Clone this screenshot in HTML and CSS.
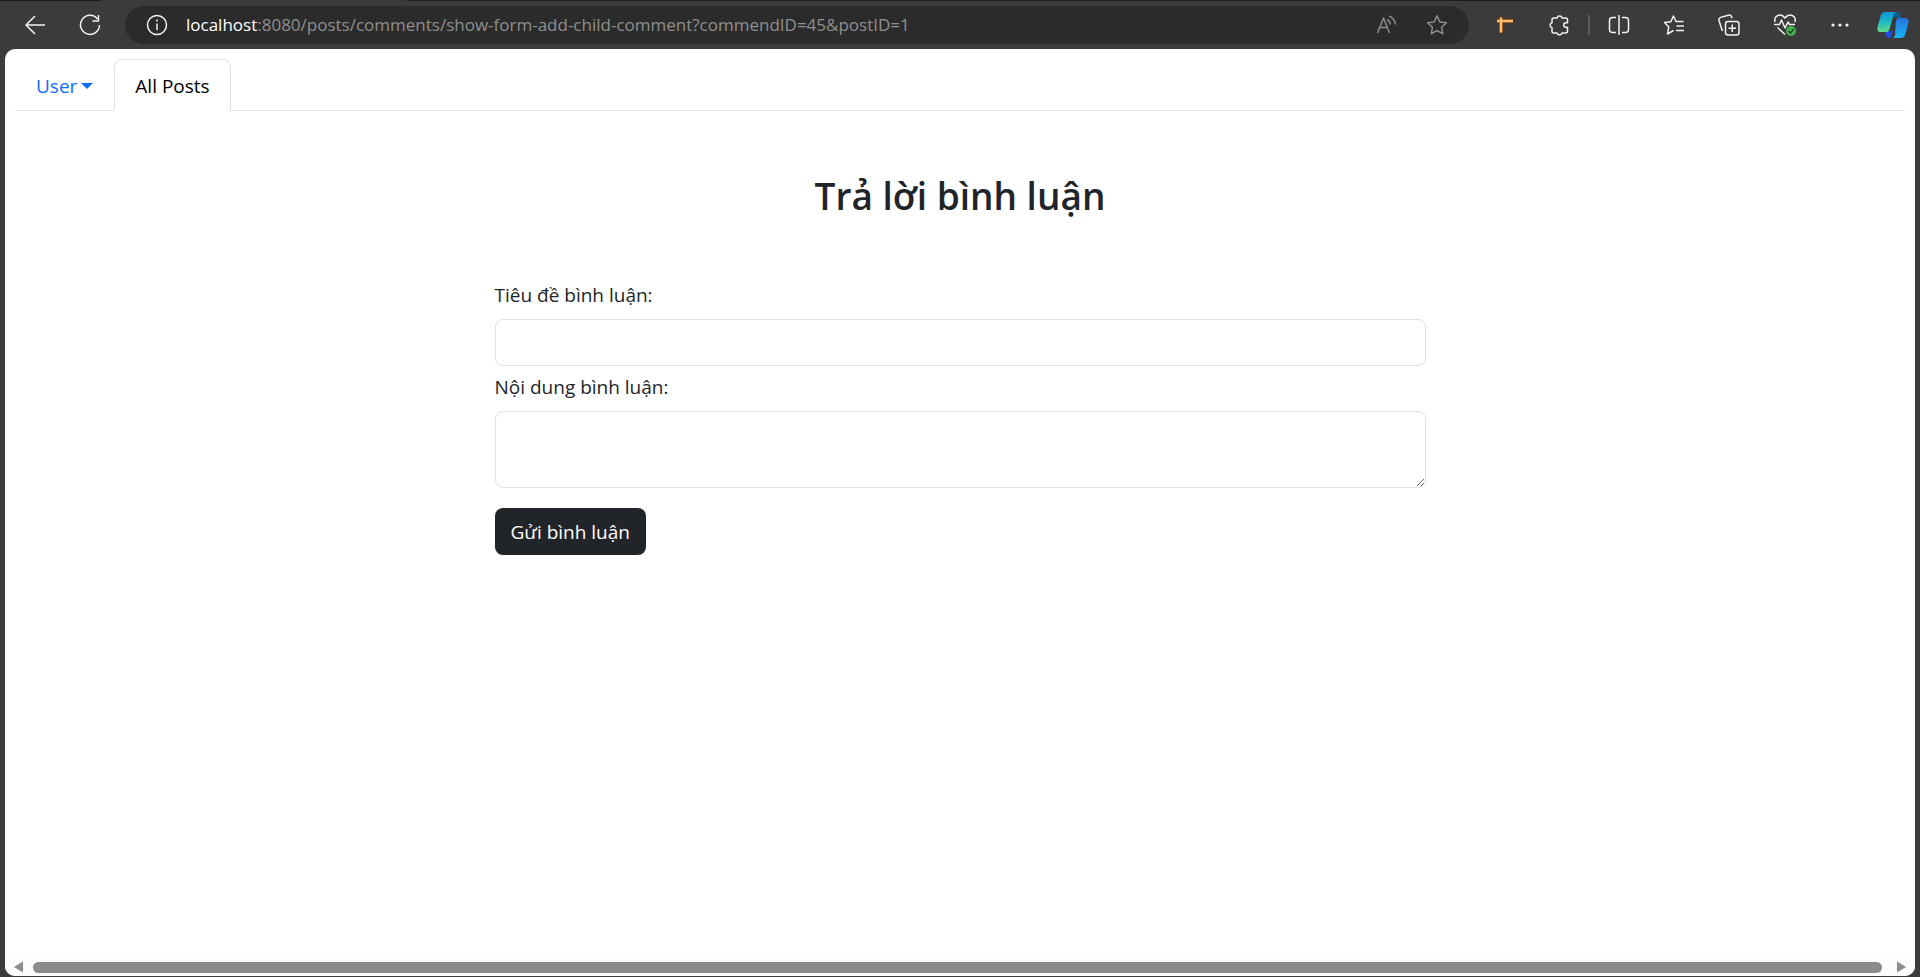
FILE: index.html
```html
<!DOCTYPE html>
<html lang="vi">
<head>
<meta charset="utf-8">
<title>Trả lời bình luận</title>
<link rel="stylesheet" href="styles.css">
</head>
<body>
<header class="toolbar">
  <div class="tab-edge"></div>
  <button class="icon-btn" aria-label="Back"><svg width="20" height="20" viewBox="0 0 20 20"><path d="M10 1L1 10l9 9M1 10h19"/></svg></button>
  <button class="icon-btn reload" aria-label="Refresh"><svg width="22" height="22" viewBox="0 0 22 22"><path d="M20.500 11A9.500 9.500 0 1 1 18.500 5M19.500 1v6h-6"/></svg></button>
  <div class="address">
    <svg width="22" height="22" viewBox="0 0 22 22"><circle cx="11" cy="11" r="9.500"/><path d="M11 9.500V16"/><circle cx="11" cy="6.500" r="1" class="solid"/></svg>
    <span class="url"><span class="host">localhost</span>:8080/posts/comments/show-form-add-child-comment?commendID=45&amp;postID=1</span>
    <button class="icon-btn dim" aria-label="Read aloud"><svg width="22" height="22" viewBox="0 0 22 22"><path d="M1.500 19L7.500 4l6 15M3.800 13.500h7.500M11 5.500c2 1 3.200 3 3.200 5M13 2c3.500 1.300 6 4.500 6.500 8.500"/></svg></button>
    <button class="icon-btn dim" aria-label="Add to favorites"><svg width="22" height="22" viewBox="0 0 22 22"><path d="M11 1.800l2.800 6.100 6.600.8-4.900 4.500 1.300 6.600L11 16.500l-5.800 3.300 1.300-6.600L1.600 8.700l6.600-.8z"/></svg></button>
  </div>
  <div class="actions">
    <button class="icon-btn" aria-label="Extension"><svg width="22" height="22" viewBox="0 0 22 22"><path d="M8 3.500v15M4 7h16" stroke="#a65b18" stroke-width="4"/><path d="M8 3.500v15M4 7h16" stroke="#ffc278" stroke-width="2"/></svg></button>
    <button class="icon-btn" aria-label="Extensions"><svg width="22" height="22" viewBox="0 0 22 22"><path d="M5.500 4H9A2.600 2.600 0 0 1 14 4H17.500A2 2 0 0 1 19.500 6V8.700H18A2.300 2.300 0 0 0 18 13.300H19.500V17A2 2 0 0 1 17.500 19H14A2.600 2.600 0 0 1 9 19H5.500A1.500 1.500 0 0 1 4 17.500V13.700A2.600 2.600 0 0 1 4 8.700V5.500A1.500 1.500 0 0 1 5.500 4z"/></svg></button>
    <span class="divider"></span>
    <button class="icon-btn" aria-label="Split screen"><svg width="22" height="22" viewBox="0 0 22 22"><path d="M11 1v20M8 3.500H4.500a3 3 0 0 0-3 3v9a3 3 0 0 0 3 3H8M14 3.500h3.500a3 3 0 0 1 3 3v9a3 3 0 0 1-3 3H14"/></svg></button>
    <button class="icon-btn" aria-label="Favorites"><svg width="22" height="22" viewBox="0 0 22 22"><path d="M20.500 7.500H13L10.500 2 7.700 7.800 1.500 8.500 5.800 13 4.500 20l6-3.500M13.500 12h7.500M13 16.500h8"/></svg></button>
    <button class="icon-btn" aria-label="Collections"><svg width="22" height="22" viewBox="0 0 22 22"><rect x="7.500" y="7.500" width="13.500" height="13.500" rx="2.500"/><path d="M14.250 10.500v7.500M10.500 14.250h7.500M5 16.500l-1-.500L1 6.500C.600 5 1.200 4 2.500 3.400L10.500 1.200c1.500-.400 2.600.200 3 1.500l.5 1.600"/></svg></button>
    <button class="icon-btn" aria-label="Browser essentials"><svg width="24" height="24" viewBox="0 0 24 24"><path d="M2 9C1 4.500 4 2 7 2c2 0 3.500 1 5 3 1.500-2 3-3 5-3 3 0 6 2.500 5 7M1 11.500h5.500l2-4.500 3.500 8 3-6 1.500 2.500H22M4.500 14.500l7.500 7"/><circle cx="18" cy="18" r="5" fill="#45b04b" stroke="none"/><path d="M15.500 18l2 2 3.300-3.800" stroke="#1e3321" stroke-width="1.200"/></svg></button>
    <button class="icon-btn" aria-label="Settings and more"><svg width="22" height="22" viewBox="0 0 22 22" class="dots"><circle cx="3" cy="11" r="1.600"/><circle cx="10" cy="11" r="1.600"/><circle cx="17" cy="11" r="1.600"/></svg></button>
  </div>
  <button class="icon-btn" aria-label="Copilot"><svg width="32" height="28" viewBox="0 0 32 28">
    <defs>
      <linearGradient id="cp-left" x1="0" y1="0" x2="0" y2="1"><stop offset="0" stop-color="#0a96e0"/><stop offset=".5" stop-color="#1fb9c4"/><stop offset="1" stop-color="#62dc8a"/></linearGradient>
      <linearGradient id="cp-right" x1="0" y1="0" x2="0" y2="1"><stop offset="0" stop-color="#2a72dc"/><stop offset="1" stop-color="#16b4fa"/></linearGradient>
    </defs>
    <g stroke="none">
      <path d="M16 1h4c2.500 0 3.300 2 4 6h-6z" fill="#0b5e91"/>
      <path d="M8 20h8l-1.500 5c-.5 1.500-1 2-2.500 2-2.500 0-3.300-2-4-7z" fill="#1d4fd8"/>
      <path d="M8.500 1H20c-2 0-3 1-3.500 3L12.500 18c-.6 2-1.500 3-3.500 3H4c-3 0-4.300-2-3.500-5L4 4c.7-2 2-3 4.500-3z" fill="url(#cp-left)"/>
      <path d="M22.500 7H28c3 0 4.300 2 3.500 5L28 24c-.7 2-2 3-4.500 3H15c2 0 2.500-1 3-3L19 10c.6-2 1.500-3 3.500-3z" fill="url(#cp-right)"/>
    </g></svg></button>
</header>
<div class="page">
  <nav class="tabs">
    <a class="tab" href="#">User<span class="caret"></span></a>
    <a class="tab active" href="#">All Posts</a>
  </nav>
  <main class="content">
    <h1>Trả lời bình luận</h1>
    <form class="form">
      <label for="title">Tiêu đề bình luận:</label>
      <input id="title" type="text">
      <label for="body">Nội dung bình luận:</label>
      <textarea id="body" rows="2"></textarea>
      <button type="button" class="submit">Gửi bình luận</button>
    </form>
  </main>
  <div class="scrollbar">
    <svg width="9" height="12" viewBox="0 0 9 12"><path d="M9 .5v11L0 6z"/></svg>
    <div class="thumb"></div>
    <svg width="9" height="12" viewBox="0 0 9 12"><path d="M0 .5v11L9 6z"/></svg>
  </div>
</div>
</body>
</html>
```
FILE: styles.css
```css
* { box-sizing: border-box; }
body {
  margin: 0;
  height: 100vh;
  display: flex;
  flex-direction: column;
  background: #3b3b3b;
  color: #212529;
  font: 19px/30px "Open Sans", "Noto Sans", sans-serif;
}
.toolbar {
  position: relative;
  display: flex;
  align-items: center;
  height: 49px;
  padding: 0 11px 0 25px;
  border-top: 1px solid #1c1c1c;
}
.tab-edge {
  position: absolute;
  top: -1px;
  left: 101px;
  width: 306px;
  height: 1px;
  background: #3b3b3b;
}
.icon-btn {
  display: flex;
  padding: 0;
  border: 0;
  background: none;
  color: #f2f2f2;
}
.icon-btn.reload { margin: 0 24px 0 34px; }
.icon-btn.dim { color: #8c8c8c; }
svg {
  flex: none;
  fill: none;
  stroke: currentColor;
  stroke-width: 1.5;
  stroke-linejoin: round;
}
.solid, .dots circle { fill: currentColor; stroke: none; }
.address {
  flex: 1;
  display: flex;
  align-items: center;
  gap: 28px;
  height: 38px;
  padding: 0 21px;
  border-radius: 19px;
  background: #2b2b2b;
  color: #f2f2f2;
}
.url {
  flex: 1;
  min-width: 0;
  margin-left: -10px;
  overflow: hidden;
  white-space: nowrap;
  font-size: 17px;
  color: #8f8f8f;
}
.host { color: #fff; }
.actions {
  display: flex;
  align-items: center;
  gap: 33px;
  margin: 0 25px 0 24px;
}
.divider {
  width: 2px;
  height: 20px;
  margin: 0 -15px;
  background: #5c5c5c;
}
.page {
  flex: 1;
  display: flex;
  flex-direction: column;
  margin: 0 5px 1px;
  border-radius: 10px;
  background: #fff;
  overflow: hidden;
}
.tabs {
  display: flex;
  margin: 10px 10px 0;
  border-bottom: 1px solid #dee2e6;
}
.tab {
  display: flex;
  align-items: center;
  gap: 4px;
  margin-bottom: -1px;
  padding: 11px 20px 9px;
  border: 1px solid transparent;
  border-radius: 8px 8px 0 0;
  color: #0d6efd;
  text-decoration: none;
}
.tab.active {
  border-color: #dee2e6 #dee2e6 #fff;
  background: #fff;
  color: #000;
}
.caret {
  border: 6px solid transparent;
  border-top-color: currentColor;
  border-bottom: 0;
}
.content {
  flex: 1;
  width: 50%;
  min-width: 930px;
  margin: 0 auto;
  padding: 60px 12px 0;
}
h1 {
  margin: 0 0 59px;
  font-size: 37px;
  line-height: 50px;
  font-weight: 600;
  text-align: center;
}
.form {
  display: flex;
  flex-direction: column;
  align-items: flex-start;
}
.form label { margin-bottom: 9px; }
.form input, .form textarea {
  width: 100%;
  padding: 8px 15px;
  border: 1px solid #dee2e6;
  border-radius: 8px;
  background: #fff;
  color: inherit;
  font: inherit;
}
.form input {
  height: 47px;
  margin-bottom: 6px;
}
.form textarea {
  height: 77px;
  margin-bottom: 20px;
}
.submit {
  height: 47px;
  padding: 0 16px;
  border: 0;
  border-radius: 8px;
  background: #212529;
  color: #fff;
  font: inherit;
}
.scrollbar {
  display: flex;
  align-items: center;
  height: 18px;
  padding: 0 9px;
  background: #fcfcfc;
}
.scrollbar svg { fill: #8b8b8b; stroke: none; }
.thumb {
  flex: 1;
  height: 11px;
  margin: 0 15px 0 10px;
  border-radius: 6px;
  background: #8b8b8b;
}
```
